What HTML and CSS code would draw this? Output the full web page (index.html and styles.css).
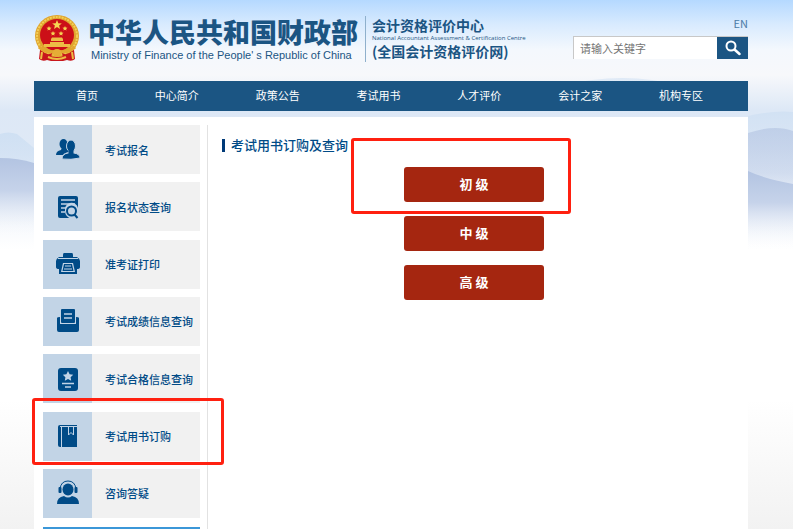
FILE: index.html
```html
<!DOCTYPE html>
<html lang="zh-CN">
<head>
    <meta charset="UTF-8">
    <meta name="viewport" content="width=device-width, initial-scale=1.0">
    <title>会计资格评价中心</title>
    <link rel="stylesheet" href="styles.css">
</head>
<body>
    <!-- Sky and mountains -->
    <svg class="scenery" viewBox="0 0 793 250" preserveAspectRatio="none" aria-hidden="true">
        <defs>
            <linearGradient id="far" x1="0" y1="0" x2="0" y2="1">
                <stop offset="0" stop-color="#cfe0f3"/>
                <stop offset="1" stop-color="#d8e4f4" stop-opacity="0"/>
            </linearGradient>
            <linearGradient id="near" x1="0" y1="0" x2="0" y2="1">
                <stop offset="0" stop-color="#b3c4e2"/>
                <stop offset="0.4" stop-color="#c6d3ea"/>
                <stop offset="1" stop-color="#ffffff" stop-opacity="0"/>
            </linearGradient>
        </defs>
        <path fill="url(#far)" d="M560 86 Q625 70 680 86 V100 H560 Z" opacity=".6"/>
        <path fill="url(#far)" d="M748 116 Q775 110 793 112 V180 H748 Z" opacity=".8"/>
        <path fill="url(#far)" d="M0 134 Q8 131 17 134 L34 148 V225 H0 Z"/>
        <path fill="url(#near)" d="M0 158 Q18 158 34 163 V240 H0 Z"/>
        <path fill="url(#near)" d="M748 133 Q775 124 793 131 V240 H748 Z" opacity=".65"/>
        <path fill="url(#near)" d="M748 171 Q765 179 793 184 V250 H748 Z"/>
    </svg>
    <div class="page">
        <header class="header">
            <div class="brand">
                <svg class="emblem" viewBox="0 0 46 48" role="img" aria-label="国徽">
                    <path fill="#c8161c" d="M6 36 L5 45 Q9 48 13 46 L17 47 H29 L33 46 Q38 48 41 45 L40 36 Z"/>
                    <ellipse cx="23" cy="22" rx="22" ry="21" fill="#dfa42e"/>
                    <ellipse cx="23" cy="22" rx="20" ry="19" fill="none" stroke="#f3cf57" stroke-width="2" stroke-dasharray="2 1"/>
                    <ellipse cx="23" cy="21" rx="17" ry="16" fill="#cc0f18"/>
                    <path fill="#f7d453" d="M23 6 l1.3 3.2 3.5.2-2.7 2.2.9 3.3-3-1.8-3 1.8.9-3.3-2.7-2.2 3.5-.2z"/>
                    <g fill="#f7d453">
                        <path id="star" d="M15 12 l.7 1.6 1.8.1-1.4 1.2.5 1.7-1.6-.9-1.6.9.5-1.7-1.4-1.2 1.8-.1z"/>
                        <use href="#star" x="16"/>
                        <use href="#star" x="4" y="5"/>
                        <use href="#star" x="12" y="5"/>
                    </g>
                    <path fill="#edbd45" d="M17 25 L18 23.500 H28 L29 25 V27 H17 Z M16 28 H30 V30 H36 V33 H10 V30 H16 Z"/>
                    <path fill="none" stroke="#e2a62f" stroke-width="3" d="M5 33 Q13 40 23 37 Q33 40 41 33"/>
                    <path fill="#c8161c" d="M7 37 Q14 42 18 39 L17 44 Q11 45 7 42 Z M39 37 Q32 42 28 39 L29 44 Q35 45 39 42 Z"/>
                    <circle cx="23" cy="39" r="4" fill="#e5ad36"/>
                    <path fill="none" stroke="#edbd45" stroke-width="2" d="M8 38 L7 45 M14 43 Q23 47 32 43 M38 38 L39 45"/>
                </svg>
                <div class="ministry">
                    <div class="ministry-cn">中华人民共和国财政部</div>
                    <div class="ministry-en">Ministry of Finance of the People' s Republic of China</div>
                </div>
                <div class="center">
                    <div class="center-cn">会计资格评价中心</div>
                    <div class="center-en">National Accountant Assessment &amp; Certification Centre</div>
                    <div class="center-cn">(全国会计资格评价网)</div>
                </div>
            </div>
            <div class="tools">
                <a class="lang" href="#">EN</a>
                <form class="search">
                    <input type="text" placeholder="请输入关键字" aria-label="请输入关键字">
                    <button type="button" aria-label="搜索">
                        <svg viewBox="0 0 16 16" width="16" height="16" fill="none" stroke="#fff">
                            <circle cx="6" cy="6" r="4.500" stroke-width="2"/>
                            <path d="M9.500 9.500 L14.500 14" stroke-width="2.500" stroke-linecap="round"/>
                        </svg>
                    </button>
                </form>
            </div>
        </header>

        <nav class="nav">
            <a href="#">首页</a>
            <a href="#">中心简介</a>
            <a href="#">政策公告</a>
            <a href="#">考试用书</a>
            <a href="#">人才评价</a>
            <a href="#">会计之家</a>
            <a href="#">机构专区</a>
        </nav>

        <div class="panel">
            <aside class="sidebar">
                <div class="side-list">
                    <a class="side-item" href="#">
                        <span class="side-icon"><svg viewBox="0 0 24 24">
                            <ellipse cx="7.500" cy="6" rx="4" ry="5"/>
                            <path d="M0 17 Q0 13 5 12 L6 9 H10 L13 14 Q8 15 7 17 Z"/>
                            <g class="gap">
                                <ellipse cx="15" cy="8" rx="4.500" ry="6"/>
                                <path d="M6 21 Q6 16 12 15 H18 Q24 16 24 20 Q15 22 6 21 Z"/>
                            </g>
                            <path d="M12.500 11 H17.500 V16 H12.500 Z"/>
                        </svg></span>
                        <span class="side-text">考试报名</span>
                    </a>
                    <a class="side-item" href="#">
                        <span class="side-icon"><svg viewBox="0 0 24 24">
                            <rect x="2" y="1" width="20" height="22" rx="2"/>
                            <path class="cut" d="M5 5 H19 M5 9 H19 M5 13 H10 M5 17 H9"/>
                            <path fill="#c2d4e6" d="M9 16 A6.500 6.500 0 0 1 22 13 V24 H16 Q9 22 9 16 Z"/>
                            <circle class="line" cx="15.500" cy="16" r="4.500"/>
                            <path class="line" d="M18.500 19.500 L21.500 23"/>
                        </svg></span>
                        <span class="side-text">报名状态查询</span>
                    </a>
                    <a class="side-item" href="#">
                        <span class="side-icon"><svg viewBox="0 0 24 24">
                            <path d="M8 1 H16 Q17 1 17 3 V5 H21 Q24 7 24 9 V15 Q24 17 21 17 V22 H3 V17 Q0 17 0 15 V9 Q0 7 3 5 H7 V3 Q7 1 8 1 Z"/>
                            <path class="cut thin" d="M2 6.500 H22"/>
                            <path fill="#c2d4e6" d="M7 11 H17 L19 20 H5 Z"/>
                            <path fill="#004b87" d="M8 12 H16 L17.500 19 H6.500 Z"/>
                            <path class="cut thin" d="M9 14 H15 M8 17 H16"/>
                        </svg></span>
                        <span class="side-text">准考证打印</span>
                    </a>
                    <a class="side-item" href="#">
                        <span class="side-icon"><svg viewBox="0 0 24 24">
                            <rect x="5" y="0" width="14" height="14" rx="1"/>
                            <path d="M1 9 Q1 8 4 8 V15 H20 V8 Q23 8 23 9 V21 Q23 23 21 23 H3 Q1 23 1 21 Z"/>
                            <path class="cut" d="M8 5 H16 M8 9 H16"/>
                        </svg></span>
                        <span class="side-text">考试成绩信息查询</span>
                    </a>
                    <a class="side-item" href="#">
                        <span class="side-icon"><svg viewBox="0 0 24 24">
                            <rect x="2" y="1" width="20" height="23" rx="3"/>
                            <path fill="#c2d4e6" d="M12 4 l1.600 3.200 3.600.5-2.600 2.500.6 3.600-3.200-1.700-3.200 1.700.6-3.600-2.600-2.500 3.600-.5z"/>
                            <path class="cut" d="M6 16.500 H18 M9 20 H15"/>
                        </svg></span>
                        <span class="side-text">考试合格信息查询</span>
                    </a>
                    <a class="side-item marked" href="#">
                        <span class="side-icon"><svg viewBox="0 0 24 24">
                            <path d="M4 1 H21 V23 H4 Q2 23 2 21 V3 Q2 1 4 1 Z"/>
                            <path class="cut thin" d="M4 2.500 H21 M5.500 3 V23"/>
                            <path class="cut thin" d="M12.500 3 V11 L15 8.500 L17.500 11 V3"/>
                        </svg></span>
                        <span class="side-text">考试用书订购</span>
                    </a>
                    <a class="side-item" href="#">
                        <span class="side-icon"><svg viewBox="0 0 24 24">
                            <ellipse cx="12" cy="8.500" rx="5.500" ry="6"/>
                            <path class="line thin" d="M4 8 Q5 0 12 0 Q19 0 20 8"/>
                            <rect x="2.500" y="6" width="3" height="6" rx="1"/>
                            <rect x="18.500" y="6" width="3" height="6" rx="1"/>
                            <path d="M1 23 Q1 16 8 15 Q12 18 16 15 Q23 16 23 23 Z"/>
                        </svg></span>
                        <span class="side-text">咨询答疑</span>
                    </a>
                </div>
                <div class="side-banner"></div>
            </aside>
            <main class="content">
                <h1>考试用书订购及查询</h1>
                <div class="levels">
                    <div class="level marked"><button type="button">初 级</button></div>
                    <div class="level"><button type="button">中 级</button></div>
                    <div class="level"><button type="button">高 级</button></div>
                </div>
            </main>
        </div>
    </div>
</body>
</html>
```

FILE: styles.css
```css
* { box-sizing: border-box; }
body { margin: 0; font-family: "Noto Sans CJK SC", sans-serif; font-size: 11px; color: #004b87; background: linear-gradient(to bottom, #b5d9ff 0, #d9ebfe 25px, #f4f8fd 50px, #f7f8fb 75px, #dde8f6 110px, #dfe9f6 150px, #ffffff 250px, #ffffff 400px, #f2f2f2 529px); }
a { color: inherit; text-decoration: none; }
.scenery { position: absolute; top: 0; left: 0; width: 100%; height: 250px; }
.page { position: relative; display: flex; flex-direction: column; min-height: 100vh; padding: 0 45px 0 34px; }

/* Header */
.header { display: flex; justify-content: space-between; height: 81px; padding-top: 14px; color: #1b5583; }
.brand { display: flex; align-items: flex-start; white-space: nowrap; }
.emblem { width: 46px; height: 48px; }
.ministry { margin: 2px 0 0 8px; }
.ministry-cn { font-size: 27px; font-weight: 900; line-height: 32px; }
.ministry-en { padding-left: 3px; font-family: "Liberation Sans", Arial, sans-serif; font-size: 11px; line-height: 15px; }
.center { height: 46px; margin: 2px 0 0 7px; padding-left: 6px; border-left: 1px solid #8fb0cc; }
.center-cn { font-size: 14px; font-weight: bold; line-height: 18px; }
.center-en { font-family: "Open Sans", sans-serif; font-size: 6px; line-height: 8px; }
.tools { display: flex; flex-direction: column; align-items: flex-end; }
.lang { line-height: 18px; color: #4a7ba6; }
.search { display: flex; width: 175px; height: 23px; margin-top: 4px; border-top: 1px solid #c8c8c8; border-left: 1px solid #c8c8c8; }
.search input { flex: 1; min-width: 0; padding: 0 6px; border: 0; outline: 0; background: #fff; font: inherit; }
.search input::placeholder { color: #757575; }
.search button { display: flex; align-items: center; justify-content: center; width: 31px; padding: 0; border: 0; background: #1b5583; }

/* Nav */
.nav { display: flex; justify-content: space-between; height: 30px; padding: 0 45px 0 42px; background: #1b5583; color: #fff; line-height: 28px; }

/* Panel */
.panel { display: flex; flex: 1; margin-top: 6px; padding: 8px 0 0 9px; background: #fff; }
.sidebar { display: flex; flex-direction: column; width: 165px; border-right: 1px solid #e2e2e2; padding-right: 7px; }
.side-list { display: flex; flex-direction: column; justify-content: space-between; height: 393px; }
.side-item { position: relative; display: flex; align-items: center; height: 49px; background: #f1f1f1; font-weight: 500; white-space: nowrap; }
.side-icon { display: flex; align-items: center; justify-content: center; width: 49px; height: 49px; margin-right: 13px; background: #c2d4e6; }
.side-icon svg { width: 24px; height: 24px; fill: #004b87; overflow: visible; }
.side-icon .gap { stroke: #c2d4e6; stroke-width: 1; }
.side-icon .cut { fill: none; stroke: #c2d4e6; stroke-width: 1.5; }
.side-icon .line { fill: none; stroke: #004b87; stroke-width: 2; }
.side-icon .thin { stroke-width: 1; }
.side-banner { flex: 1; margin-top: 9px; background: #3b97d8; }

.content { flex: 1; padding: 11px 22px 0 14px; }
.content h1 { display: flex; align-items: center; margin: 0; font-size: 13px; font-weight: 500; line-height: 18px; }
.content h1::before { content: ""; width: 3px; height: 13px; margin-right: 6px; background: #003a78; }
.levels { display: flex; flex-direction: column; align-items: center; gap: 14px; margin-top: 13px; }
.level { position: relative; }
.level button { display: block; width: 140px; height: 35px; padding: 0 0 2px; border: 0; border-radius: 3px; background: #a52610; color: #fff; font: bold 13px "Noto Sans CJK SC", sans-serif; }

/* Red marks round the chosen entry and button */
.marked::after { content: ""; position: absolute; z-index: 1; border: 3px solid #ff2010; border-radius: 3px; pointer-events: none; }
.side-item.marked::after { top: -14px; right: -24px; bottom: -4px; left: -11px; }
.level.marked::after { top: -29px; right: -27px; bottom: -12px; left: -53px; }
```
